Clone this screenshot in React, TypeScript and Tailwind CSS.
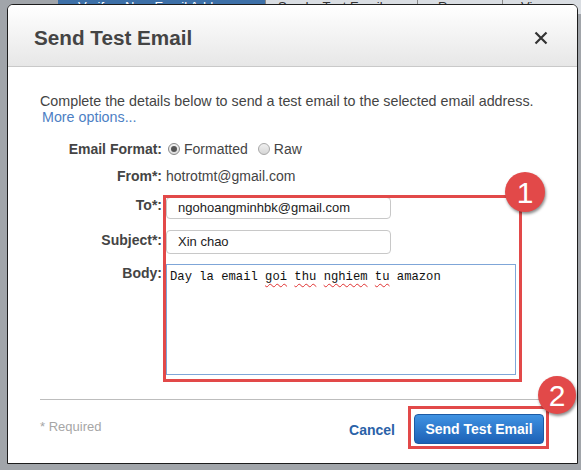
import React from "react";

function Radio({ checked }: { checked: boolean }) {
  return (
    <span
      className={
        "inline-flex h-[12px] w-[12px] items-center justify-center rounded-full border " +
        (checked
          ? "border-[#8a8a8a] bg-gradient-to-b from-[#f4f4f4] to-[#dcdcdc]"
          : "border-[#a8a8a8] bg-gradient-to-b from-[#f0f0f0] to-[#d6d6d6]")
      }
    >
      {checked && <span className="h-[6px] w-[6px] rounded-full bg-[#555]" />}
    </span>
  );
}

function Badge({ n, className }: { n: string; className: string }) {
  return (
    <div
      className={
        "absolute flex items-center justify-center rounded-full bg-[#e24949] text-white shadow-[1px_2px_3px_rgba(0,0,0,0.45)] " +
        className
      }
      style={{ fontFamily: '"Liberation Sans", Arial, sans-serif' }}
    >
      {n}
    </div>
  );
}

const wavy = "underline decoration-wavy decoration-[#e03030] decoration-1 underline-offset-[3px]";

export default function App() {
  return (
    <div
      className="relative h-[470px] w-[581px] overflow-hidden bg-[#a1a5aa]"
      style={{ fontFamily: '"Liberation Sans", Arial, sans-serif' }}
    >
      {/* background page tabs */}
      <div className="flex h-[14px] items-start text-[13px] leading-[14px]">
        <div className="w-[58px]" />
        <div className="h-[14px] w-[207px] bg-[#3d70a8] pl-[20px] text-white">Verify a New Email Address</div>
        <div className="h-[14px] w-[152px] border-l border-[#888] bg-[#d9dde2] pl-[12px] text-[#333]">Send a Test Email</div>
        <div className="h-[14px] w-[85px] border-l border-[#888] bg-[#d9dde2] pl-[20px] text-[#333]">Remove</div>
        <div className="h-[14px] flex-1 border-l border-[#888] bg-[#d9dde2] pl-[18px] text-[#333]">View Details</div>
      </div>

      {/* modal */}
      <div className="absolute left-[7px] top-[4px] h-[460px] w-[571px] rounded-t-[6px] border border-[#1c1c1c] bg-white">
        <div className="flex h-[62px] items-center justify-between rounded-t-[5px] border-b border-[#c9c9c9] bg-gradient-to-b from-[#ffffff] to-[#e7e7e7] pl-[26px] pr-[29px] pt-[5px]">
          <div className="text-[20.7px] font-bold leading-6 text-[#444]">Send Test Email</div>
          <svg width="14" height="14" viewBox="0 0 14 14">
            <path d="M1.5 1.5 L12.5 12.5 M12.5 1.5 L1.5 12.5" stroke="#333" strokeWidth="2.2" />
          </svg>
        </div>

        <div className="pl-[32px] pr-[33px] pt-[26px]">
          <div className="text-[14.3px] leading-4 text-[#444]">
            Complete the details below to send a test email to the selected email address.
            <br />
            <span className="pl-[2px] text-[#4d7fc4]">More options...</span>
          </div>

          <div className="-ml-[32px] mt-[14px] flex flex-col text-[14px] text-[#444]">
            <div className="flex h-[20px] items-center">
              <div className="w-[154px] text-right font-bold">Email Format:</div>
              <div className="ml-[6px] flex items-center">
                <Radio checked />
                <span className="ml-[4px]">Formatted</span>
                <span className="ml-[10px]" />
                <Radio checked={false} />
                <span className="ml-[4px]">Raw</span>
              </div>
            </div>

            <div className="mt-[7px] flex h-[20px] items-center">
              <div className="w-[154px] text-right font-bold">From*:</div>
              <div className="ml-[4px]">hotrotmt@gmail.com</div>
            </div>

            <div className="mt-[11px] flex items-start">
              <div className="w-[154px] text-right font-bold leading-4">To*:</div>
              <div className="ml-[4px] flex h-[22px] w-[225px] items-center rounded-[4px] border border-[#c8c8c8] pl-[11px] text-[13px] text-[#222]">
                ngohoangminhbk@gmail.com
              </div>
            </div>

            <div className="mt-[11px] flex items-start">
              <div className="w-[154px] pt-[2px] text-right font-bold leading-4">Subject*:</div>
              <div className="ml-[4px] flex h-[24px] w-[225px] items-center rounded-[4px] border border-[#c8c8c8] pl-[11px] text-[13px] text-[#222]">
                Xin chao
              </div>
            </div>

            <div className="mt-[10px] flex items-start">
              <div className="w-[154px] pt-[1px] text-right font-bold leading-4">Body:</div>
              <div
                className="ml-[4px] h-[111px] w-[350px] border border-[#7fa6d8] pl-[3px] pt-[4px] text-[12.2px] leading-4 text-[#111]"
                style={{ fontFamily: '"Liberation Mono", "DejaVu Sans Mono", monospace' }}
              >
                Day la email <span className={wavy}>goi</span> <span className={wavy}>thu</span>{" "}
                <span className={wavy}>nghiem</span> <span className={wavy}>tu</span> amazon
              </div>
            </div>
          </div>

          <div className="mt-[24px] h-px bg-[#bdbdbd]" />

          <div className="flex items-start justify-between pt-[14px]">
            <div className="pt-[5px] text-[13px] leading-4 text-[#a6a6a6]">* Required</div>
            <div className="flex items-center">
              <div className="mt-[2px] text-[14px] font-bold text-[#2a62a8]">Cancel</div>
              <div className="ml-[19px] flex h-[30px] w-[130px] items-center justify-center rounded-[4px] border border-[#1c5aa4] bg-gradient-to-b from-[#3f92e2] to-[#1d61b6] text-[14px] font-bold text-white">
                Send Test Email
              </div>
            </div>
          </div>
        </div>

        {/* annotations */}
        <div className="pointer-events-none absolute left-[155px] top-[190px] h-[187px] w-[359px] border-[3px] border-[#e24949]" />
        <Badge n="1" className="left-[497px] top-[167px] h-[40px] w-[40px] text-[30px]" />
        <div className="pointer-events-none absolute left-[400px] top-[401px] h-[43px] w-[141px] border-[3px] border-[#e24949]" />
        <Badge n="2" className="left-[530px] top-[371px] h-[38px] w-[38px] text-[30px]" />
      </div>
    </div>
  );
}
